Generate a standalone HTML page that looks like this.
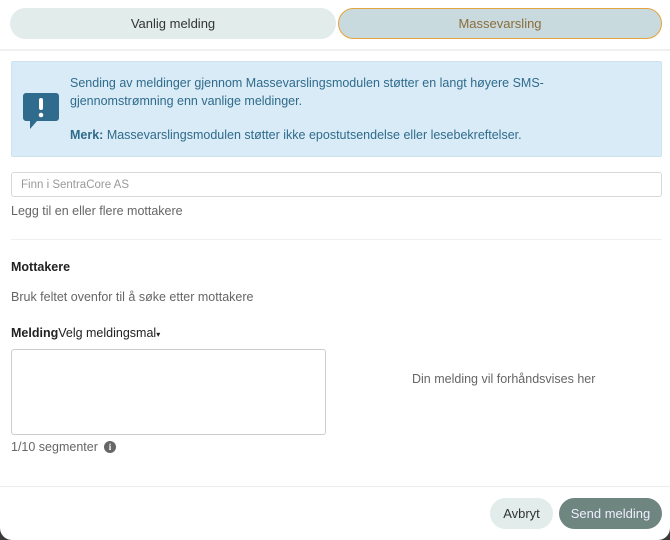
<!DOCTYPE html>
<html><head><style>
*{box-sizing:border-box;margin:0;padding:0}
html,body{width:670px;height:540px;overflow:hidden;background:#3a3a3a}
body{font-family:"Liberation Sans",sans-serif;color:#444}
.modal{position:absolute;left:0;top:0;width:670px;height:540px;background:#fff;border-radius:0 0 12px 12px}
.a{position:absolute;white-space:nowrap}
.tab{position:absolute;top:8px;height:31px;border-radius:16px;font-size:13px;text-align:center;line-height:31px}
.hr{position:absolute;left:0;width:670px;height:1px;background:#ececec}
.t{font-size:12.5px;color:#666}
</style></head><body><div class="modal">
<div class="tab" style="left:10px;width:326px;background:#e2eceb;color:#333">Vanlig melding</div>
<div class="tab" style="left:338px;width:324px;background:#c9dade;border:1px solid #e3a33e;color:#8a6d3b;line-height:29px">Massevarsling</div>
<div class="hr" style="top:49px;height:2px;background:#f0f0f0"></div>
<div class="a" style="left:11px;top:61px;width:651px;height:96px;background:#d9ebf6;border:1px solid #cfe3ef;border-radius:2px"></div>
<svg class="a" style="left:23px;top:93px" width="36" height="36" viewBox="0 0 36 36"><path d="M3 0h30a3 3 0 0 1 3 3v22a3 3 0 0 1-3 3H14l-7 8v-8H3a3 3 0 0 1-3-3V3a3 3 0 0 1 3-3z" fill="#2f6b8c"/><rect x="16" y="5" width="4" height="12" rx="2" fill="#fff"/><circle cx="18" cy="22" r="2.3" fill="#fff"/></svg>
<div class="a" style="left:70px;top:74px;font-size:12.5px;color:#2f6b8c;line-height:18px">Sending av meldinger gjennom Massevarslingsmodulen støtter en langt høyere SMS-<br>gjennomstrømning enn vanlige meldinger.</div>
<div class="a" style="left:70px;top:128px;font-size:12.5px;color:#2f6b8c"><b>Merk:</b> Massevarslingsmodulen støtter ikke epostutsendelse eller lesebekreftelser.</div>
<div class="a" style="left:11px;top:172px;width:651px;height:25px;border:1px solid #d8d8d8;border-radius:3px;font-size:11.5px;color:#999;padding:6px 9px">Finn i SentraCore AS</div>
<div class="a t" style="left:11px;top:204px">Legg til en eller flere mottakere</div>
<div class="hr" style="top:239px;left:11px;width:651px;background:#f0f0f0"></div>
<div class="a" style="left:11px;top:260px;font-size:12.5px;font-weight:bold;color:#222">Mottakere</div>
<div class="a t" style="left:11px;top:290px">Bruk feltet ovenfor til å søke etter mottakere</div>
<div class="a" style="left:11px;top:326px;font-size:12.5px;color:#222"><b>Melding</b>Velg meldingsmal<span style="font-size:8px">▾</span></div>
<div class="a" style="left:11px;top:349px;width:315px;height:86px;border:1px solid #ccc;border-radius:3px"></div>
<div class="a t" style="left:412px;top:372px">Din melding vil forhåndsvises her</div>
<div class="a t" style="left:11px;top:440px">1/10 segmenter</div>
<div class="a" style="left:104px;top:441px;width:12px;height:12px;border-radius:50%;background:#666;color:#fff;font-size:9px;font-weight:bold;text-align:center;line-height:12px;font-family:'Liberation Serif',serif">i</div>
<div class="hr" style="top:486px"></div>
<div class="a" style="left:490px;top:498px;width:63px;height:31px;border-radius:16px;background:#e2eceb;color:#333;font-size:13px;text-align:center;line-height:31px">Avbryt</div>
<div class="a" style="left:559px;top:498px;width:103px;height:31px;border-radius:16px;background:#6f8580;color:#eef;font-size:13px;text-align:center;line-height:31px">Send melding</div>
</div></body></html>
